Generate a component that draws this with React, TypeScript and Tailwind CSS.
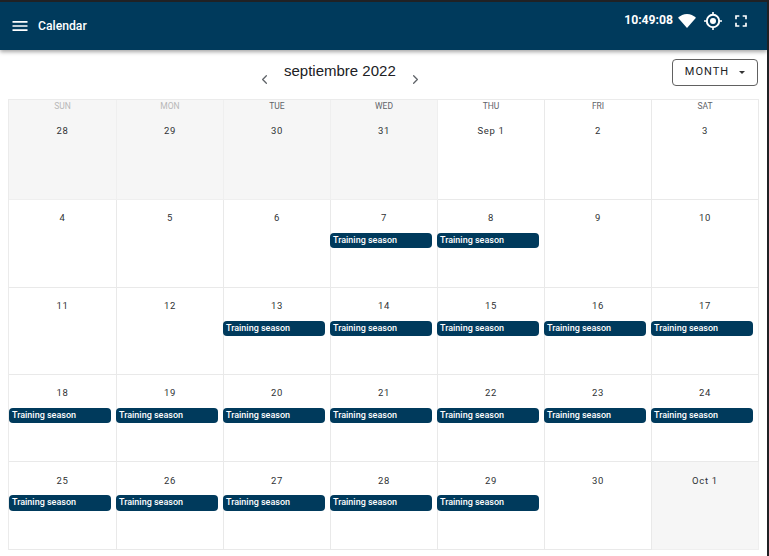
import { ChevronLeft, ChevronRight } from 'lucide-react'

const weekDays = ['SUN', 'MON', 'TUE', 'WED', 'THU', 'FRI', 'SAT']

type Day = { label: string; outside?: boolean; event?: boolean }

const weeks: { height: string; dateTop: string; eventBox: string; days: Day[] }[] = [
  {
    height: 'h-[100px]',
    dateTop: 'mt-[13px]',
    eventBox: 'mt-[9px] h-[15px]',
    days: [
      { label: '28', outside: true },
      { label: '29', outside: true },
      { label: '30', outside: true },
      { label: '31', outside: true },
      { label: 'Sep 1' },
      { label: '2' },
      { label: '3' },
    ],
  },
  {
    height: 'h-[88px]',
    dateTop: 'mt-[12px]',
    eventBox: 'mt-[9px] h-[15px]',
    days: [
      { label: '4' },
      { label: '5' },
      { label: '6' },
      { label: '7', event: true },
      { label: '8', event: true },
      { label: '9' },
      { label: '10' },
    ],
  },
  {
    height: 'h-[87px]',
    dateTop: 'mt-[12px]',
    eventBox: 'mt-[9px] h-[15px]',
    days: [
      { label: '11' },
      { label: '12' },
      { label: '13', event: true },
      { label: '14', event: true },
      { label: '15', event: true },
      { label: '16', event: true },
      { label: '17', event: true },
    ],
  },
  {
    height: 'h-[87px]',
    dateTop: 'mt-[12px]',
    eventBox: 'mt-[9px] h-[15px]',
    days: [
      { label: '18', event: true },
      { label: '19', event: true },
      { label: '20', event: true },
      { label: '21', event: true },
      { label: '22', event: true },
      { label: '23', event: true },
      { label: '24', event: true },
    ],
  },
  {
    height: 'h-[88px]',
    dateTop: 'mt-[13px]',
    eventBox: 'mt-[8px] h-[16px]',
    days: [
      { label: '25', event: true },
      { label: '26', event: true },
      { label: '27', event: true },
      { label: '28', event: true },
      { label: '29', event: true },
      { label: '30' },
      { label: 'Oct 1', outside: true },
    ],
  },
]

function SignalIcon() {
  return (
    <svg width="18" height="14" viewBox="0 0 18 14" fill="white">
      <path d="M0 3.8C2.5 1.4 5.6 0 9 0s6.5 1.4 9 3.8L9 14z" />
    </svg>
  )
}

function GpsIcon() {
  return (
    <svg width="18" height="18" viewBox="0 0 18 18" fill="none" stroke="white">
      <circle cx="9" cy="9" r="6.2" strokeWidth="2" />
      <circle cx="9" cy="9" r="3" fill="white" stroke="none" />
      <path d="M9 0v3M9 15v3M0 9h3M15 9h3" strokeWidth="1.6" />
    </svg>
  )
}

function FullscreenIcon() {
  return (
    <svg width="20" height="20" viewBox="0 0 24 24" fill="white">
      <path d="M7 14H5v5h5v-2H7v-3zm-2-4h2V7h3V5H5v5zm12 7h-3v2h5v-5h-2v3zM14 5v2h3v3h2V5h-5z" />
    </svg>
  )
}

function HamburgerIcon() {
  return (
    <svg width="20" height="20" viewBox="0 0 24 24" fill="white">
      <path d="M3 18h18v-2H3v2zm0-5h18v-2H3v2zm0-7v2h18V6H3z" />
    </svg>
  )
}

export default function App() {
  return (
    <div className="h-[556px] w-[769px] overflow-hidden bg-white font-['Roboto',sans-serif] border-t-2 border-r-2 border-[#202124]">
      {/* App bar */}
      <header className="relative z-10 flex h-[48px] items-center justify-between bg-[#003a5c] pl-[10px] pr-[16px] shadow-[0_2px_4px_rgba(0,0,0,0.35)]">
        <div className="flex items-center">
          <HamburgerIcon />
          <span className="ml-[8px] text-[12.2px] font-medium text-white">Calendar</span>
        </div>
        <div className="mb-[9px] flex items-center text-white">
          <span className="mb-[2px] text-[12.2px] font-bold">10:49:08</span>
          <span className="ml-[5px] flex"><SignalIcon /></span>
          <span className="ml-[8px] flex"><GpsIcon /></span>
          <span className="ml-[9px] flex"><FullscreenIcon /></span>
        </div>
      </header>

      {/* Toolbar */}
      <div className="flex h-[49px] items-center pl-[257px] pr-[9px]">
        <ChevronLeft size={15} className="mt-[9px] text-[#5f6368]" />
        <span className="ml-[12px] mb-[6px] text-[15px] text-[#202124] font-['Liberation_Sans',sans-serif]">septiembre 2022</span>
        <ChevronRight size={15} className="ml-[12px] mt-[9px] text-[#5f6368]" />
        <button className="ml-auto mt-[-5px] flex h-[27px] w-[86px] items-center justify-center rounded-[4px] border border-[#616161] text-[11px] tracking-[1px] text-[#202124]">
          MONTH
          <svg width="6" height="3" viewBox="0 0 6 3" className="ml-[10px]" fill="#333">
            <path d="M0 0h6L3 3z" />
          </svg>
        </button>
      </div>

      {/* Month grid */}
      <div className="mx-2 w-[751px] border-l border-t border-[#ebebeb]">
        {weeks.map((week, w) => (
          <div key={w} className={`grid grid-cols-[108px_repeat(6,107px)] ${week.height}`}>
            {week.days.map((day, d) => (
              <div
                key={d}
                className={`flex min-w-0 flex-col border-r border-b ${day.outside ? 'border-[#efefef] bg-[#f6f6f6]' : 'border-[#e9e9e9] bg-white'}`}
              >
                {w === 0 && (
                  <div className={`h-[12px] text-center text-[8.5px] leading-[12px] ${d < 2 ? 'text-[#b8b8b8]' : 'text-[#5f6368]'}`}>
                    {weekDays[d]}
                  </div>
                )}
                <div className={`text-center text-[9.5px] tracking-[0.7px] leading-[12px] text-[#2f3235] ${week.dateTop}`}>
                  {day.label}
                </div>
                {day.event && (
                  <div className={`mr-[5px] flex items-center rounded-[4px] bg-[#003a5c] pl-[3px] text-[9px] font-medium text-white ${d > 0 ? 'ml-[-1px]' : ''} ${week.eventBox}`}>
                    Training season
                  </div>
                )}
              </div>
            ))}
          </div>
        ))}
      </div>
    </div>
  )
}
